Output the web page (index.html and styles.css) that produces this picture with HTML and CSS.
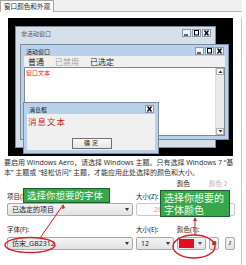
FILE: index.html
```html
<html>

<head>
  <title>窗口颜色和外观</title>
  <meta charset="utf-8">
  <link rel="stylesheet" href="styles.css">
</head>

<body>
  <div class="tabs">
    <div class="tab">窗口颜色和外观</div>
  </div>
  <div class="panel">
    <!-- 预览区：桌面上的几个窗口 -->
    <div class="preview">
      <div class="win inactive">
        <div class="titlebar">
          <span>非活动窗口</span>
          <div class="btns">
            <span><svg width="7" height="6"><path d="M1 5h4" stroke="#000" stroke-width="1.2"/></svg></span>
            <span><svg width="7" height="6"><rect x="1.5" y="0.5" width="4" height="4.5" fill="none" stroke="#000"/></svg></span>
            <span><svg width="7" height="6"><path d="M1.5 0.5l4 5M5.5 0.5l-4 5" stroke="#000" stroke-width="1.3"/></svg></span>
          </div>
        </div>
      </div>
      <div class="win active">
        <div class="titlebar">
          <span>活动窗口</span>
          <div class="btns">
            <span><svg width="7" height="6"><path d="M1 5h4" stroke="#000" stroke-width="1.2"/></svg></span>
            <span><svg width="7" height="6"><rect x="1.5" y="0.5" width="4" height="4.5" fill="none" stroke="#000"/></svg></span>
            <span><svg width="7" height="6"><path d="M1.5 0.5l4 5M5.5 0.5l-4 5" stroke="#000" stroke-width="1.3"/></svg></span>
          </div>
        </div>
        <div class="menu">
          <span>普通</span>
          <span class="off">已禁用</span>
          <span>已选定</span>
        </div>
        <div class="client">
          <div class="wtext">窗口文本</div>
          <div class="scroll">
            <span><svg width="7" height="5"><path d="M1.5 4h4l-2-2.5z" fill="#333"/></svg></span>
            <span><svg width="7" height="5"><path d="M1.5 1h4l-2 2.5z" fill="#333"/></svg></span>
          </div>
        </div>
      </div>
      <div class="win msg">
        <div class="titlebar">
          <span>消息框</span>
          <div class="btns">
            <span><svg width="7" height="6"><path d="M1.5 0.5l4 5M5.5 0.5l-4 5" stroke="#000" stroke-width="1.3"/></svg></span>
          </div>
        </div>
        <div class="msgbody">
          <div class="mtext">消息文本</div>
          <div class="ok">确定</div>
        </div>
      </div>
    </div>

    <p class="note">要启用 Windows Aero，请选择 Windows 主题。只有选择 Windows 7 “基<br>本” 主题或 “轻松访问” 主题，才能应用此处选择的颜色和大小。</p>

    <div class="form">
      <div class="row lab top">
        <span></span>
        <span></span>
        <span>颜色</span>
        <span class="grey">颜色 2</span>
      </div>
      <div class="row lab">
        <span>项目(I):</span>
        <span>大小(Z):</span>
        <span></span>
        <span></span>
      </div>
      <div class="row ctl">
        <div class="select">已选定的项目</div>
        <div class="box num">26</div>
        <div class="box"></div>
        <div class="box"></div>
      </div>
      <div class="row lab gap">
        <span>字体(F):</span>
        <span>大小(E):</span>
        <span>颜色(T):</span>
        <span></span>
      </div>
      <div class="row ctl">
        <div class="select">仿宋_GB2312</div>
        <div class="select small">12</div>
        <div class="color"><i></i><b></b></div>
        <div class="styles"><span class="bold">B</span><span class="ital">I</span></div>
      </div>
    </div>
  </div>

  <!-- 标注 -->
  <div class="tip tip1">选择你想要的字体</div>
  <div class="tip tip2">选择你想要的<br>字体颜色</div>
  <svg class="marks" width="246" height="265">
    <ellipse cx="30" cy="245" rx="25" ry="7.5" fill="none" stroke="#d21f2b" stroke-width="1.4"/>
    <path d="M40 238L63 205" stroke="#d21f2b" stroke-width="1"/>
    <path d="M63 204l-1 5 3-1z" fill="#d21f2b"/>
    <ellipse cx="194" cy="246.5" rx="21" ry="11.5" fill="none" stroke="#d21f2b" stroke-width="1.4"/>
    <path d="M195 235V219" stroke="#d21f2b" stroke-width="1"/>
    <path d="M195 217l-2 4h4z" fill="#d21f2b"/>
  </svg>
</body>

</html>
```

FILE: styles.css
```css
* {
  margin: 0;
  padding: 0;
  box-sizing: border-box;
}

body {
  position: relative;
  width: 246px;
  height: 265px;
  overflow: hidden;
  background: #fff;
  font-family: "Noto Sans", "Noto Sans CJK SC", sans-serif;
  font-size: 7px;
  color: #1e1e1e;
}

.tabs {
  display: flex;
  width: 242px;
  height: 12px;
  background: #f0f0f0;
  border-bottom: 1px solid #b9b9b9;
}

.tab {
  width: 54px;
  height: 12px;
  padding-left: 3px;
  background: #fff;
  border: 1px solid #a5a5a5;
  border-bottom: none;
  font-size: 6.6px;
  line-height: 11px;
  white-space: nowrap;
}

.panel {
  width: 242px;
  height: 253px;
  border-right: 1px solid #c8c8c8;
}

/* 预览 */
.preview {
  position: relative;
  width: 225px;
  height: 138px;
  margin: 6px 0 0 8px;
  background: #000;
  overflow: hidden;
}

.win {
  position: absolute;
  display: flex;
  flex-direction: column;
  padding: 1px 3px 3px;
  border: 1px solid #7d8a99;
}

.inactive {
  left: 7px;
  top: 8px;
  width: 201px;
  height: 122px;
  background: #d6e0eb;
}

.active {
  left: 12px;
  top: 26px;
  width: 209px;
  height: 96px;
  background: #b9d1ea;
}

.msg {
  left: 15px;
  top: 84px;
  width: 136px;
  height: 52px;
  background: #b9d1ea;
}

.titlebar {
  display: flex;
  justify-content: space-between;
  align-items: center;
  height: 10px;
  padding: 0 1px 0 2px;
  font-size: 6px;
  color: #222;
}

.inactive .titlebar {
  color: #555;
}

.btns {
  display: flex;
  gap: 1px;
}

.btns span {
  display: flex;
  align-items: center;
  justify-content: center;
  width: 9px;
  height: 8px;
  background: #eef3f9;
  border: 1px solid #8a98aa;
}

.menu {
  display: flex;
  gap: 11px;
  height: 11px;
  padding-left: 4px;
  background: #f0f0f0;
  font-size: 8px;
  line-height: 11px;
}

.menu .off {
  color: #a0a0a0;
}

.client {
  display: flex;
  flex: 1;
  background: #fff;
  border: 1px solid #828790;
}

.wtext {
  flex: 1;
  padding: 1px 1px;
  font-size: 6px;
  line-height: 9px;
  color: #e8141c;
}

.scroll {
  display: flex;
  flex-direction: column;
  justify-content: space-between;
  width: 9px;
  background: #e9e9e9;
  border-left: 1px solid #ddd;
}

.scroll span {
  display: flex;
  justify-content: center;
  height: 7px;
  background: #f4f4f4;
  border: 1px solid #b0b0b0;
}

.msgbody {
  flex: 1;
  background: #f0f0f0;
}

.mtext {
  padding: 2px 0 0 1px;
  font-size: 8.5px;
  letter-spacing: 1px;
  line-height: 12px;
  color: #c8262c;
}

.ok {
  width: 40px;
  height: 11px;
  margin: 10px 0 0 45px;
  background: linear-gradient(#fafafa, #e6e6e6);
  border: 1px solid #707070;
  font-size: 6px;
  line-height: 9px;
  letter-spacing: 2px;
  text-align: center;
}

.note {
  margin-top: 2px;
  padding-left: 4px;
  font-size: 7px;
  line-height: 10px;
  white-space: nowrap;
  color: #333;
}

/* 字体设置 */
.form {
  margin-top: 2px;
  padding-left: 7px;
}

.row {
  display: grid;
  grid-template-columns: 126px 38px 29px 26px;
  column-gap: 3px;
}

.lab {
  height: 9px;
  margin-bottom: 2px;
  font-size: 6.5px;
  line-height: 9px;
}

.lab.top {
  height: 8px;
  margin-bottom: 4px;
  line-height: 8px;
}

.lab.gap {
  margin: 9px 0 3px;
}

.grey {
  color: #b4b4b4;
}

.ctl {
  height: 13px;
}

.select {
  position: relative;
  padding-left: 4px;
  background: linear-gradient(#f3f3f3, #e3e3e3);
  border: 1px solid #a9a9a9;
  border-radius: 2px;
  font-size: 7px;
  line-height: 11px;
}

.select::after {
  position: absolute;
  right: 3px;
  top: 4px;
  content: "";
  border: 2.5px solid transparent;
  border-top: 3px solid #333;
}

.box {
  background: #fbfbfb;
  border: 1px solid #c9c9c9;
  border-radius: 2px;
}

.num {
  padding-left: 17px;
  font-size: 7px;
  line-height: 11px;
  color: #e0a0a0;
}

.color {
  display: flex;
  background: linear-gradient(#f3f3f3, #e3e3e3);
  border: 1px solid #a9a9a9;
  border-radius: 2px;
}

.color i {
  width: 15px;
  margin: 1px;
  background: #e01020;
}

.color b {
  flex: 1;
  position: relative;
}

.color b::after {
  position: absolute;
  left: 3px;
  top: 4px;
  content: "";
  border: 2.5px solid transparent;
  border-top: 3px solid #555;
}

.styles {
  display: flex;
  justify-content: space-between;
}

.styles span {
  width: 10px;
  background: linear-gradient(#f3f3f3, #e3e3e3);
  border: 1px solid #a9a9a9;
  border-radius: 2px;
  font-family: "Liberation Serif", serif;
  font-size: 7px;
  line-height: 11px;
  text-align: center;
}

.bold {
  font-weight: bold;
}

.ital {
  font-style: italic;
}

/* 标注 */
.tip {
  position: absolute;
  background: #37a74b;
  border: 1px solid #1f5e2c;
  color: #f2fff2;
  font-size: 9.5px;
  line-height: 13px;
  padding-left: 3px;
}

.tip1 {
  left: 23px;
  top: 188px;
  width: 87px;
  height: 15px;
}

.tip2 {
  left: 160px;
  top: 190px;
  width: 70px;
  height: 27px;
  padding-top: 1px;
  font-size: 10px;
  line-height: 12px;
}

.marks {
  position: absolute;
  left: 0;
  top: 0;
}
```
